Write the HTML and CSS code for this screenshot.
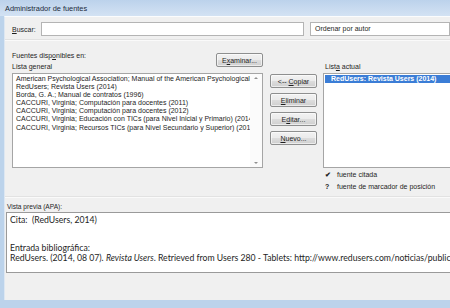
FILE: index.html
```html
<!DOCTYPE html>
<html lang="es">
<head>
    <meta charset="UTF-8">
    <title>Administrador de fuentes</title>
    <link rel="stylesheet" href="styles.css">
</head>
<body>
    <div class="window">
        <div class="titlebar">Administrador de fuentes</div>
        <div class="dialog">
            <div class="search-row">
                <span class="search-label"><u>B</u>uscar:</span>
                <div class="field search-field"></div>
                <div class="field sort-field">Ordenar por autor</div>
            </div>
            <div class="rule"></div>

            <div class="lists">
                <div class="col-master">
                    <div class="master-head">
                        <div class="labels">
                            <div>Fuentes disp<u>o</u>nibles en:</div>
                            <div>Lista general</div>
                        </div>
                        <button class="btn btn-browse">E<u>x</u>aminar...</button>
                    </div>
                    <div class="listbox master-list">
                        <div class="items">
                            <div class="item">American Psychological Association; Manual of the American Psychological Association</div>
                            <div class="item">RedUsers; Revista Users (2014)</div>
                            <div class="item">Borda, G. A.; Manual de contratos (1996)</div>
                            <div class="item">CACCURI, Virginia; Computación para docentes (2011)</div>
                            <div class="item">CACCURI, Virginia; Computación para docentes (2012)</div>
                            <div class="item">CACCURI, Virginia; Educación con TICs (para Nivel Inicial y Primario) (2014)</div>
                            <div class="item">CACCURI, Virginia; Recursos TICs (para Nivel Secundario y Superior) (2014)</div>
                        </div>
                        <div class="scrollbar">
                            <span class="arrow up"></span>
                            <span class="arrow down"></span>
                        </div>
                    </div>
                </div>

                <div class="col-buttons">
                    <button class="btn">&lt;-- <u>C</u>opiar</button>
                    <button class="btn"><u>E</u>liminar</button>
                    <button class="btn">E<u>d</u>itar...</button>
                    <button class="btn"><u>N</u>uevo...</button>
                </div>

                <div class="col-current">
                    <div class="current-label">List<u>a</u> actual</div>
                    <div class="listbox current-list">
                        <div class="item selected">RedUsers: Revista Users (2014)</div>
                    </div>
                    <div class="legend">
                        <div class="legend-row"><span class="mark">&#10004;</span>fuente citada</div>
                        <div class="legend-row"><span class="mark">?</span>fuente de marcador de posición</div>
                    </div>
                </div>
            </div>

            <div class="rule"></div>
            <div class="preview-label">Vista previa (APA):</div>
            <div class="preview">
                <p>Cita:&nbsp; (RedUsers, 2014)</p>
                <p class="entry-head">Entrada bibliográfica:</p>
                <p>RedUsers. (2014, 08 07). <i>Revista Users</i>. Retrieved from Users 280 - Tablets: http://www.redusers.com/noticias/publicaciones/</p>
            </div>
        </div>
    </div>
</body>
</html>
```

FILE: styles.css
```css
body {
    margin: 0;
    background: #bcd3eb;
    font-family: "Liberation Sans", Arial, sans-serif;
    font-size: 7px;
    color: #1e1e1e;
}

.window {
    width: 450px;
    height: 308px;
    overflow: hidden;
    display: flex;
    flex-direction: column;
}

.titlebar {
    height: 16px;
    flex: none;
    box-sizing: border-box;
    padding: 4px 0 0 5px;
    font-size: 7.4px;
    color: #1b2a3a;
    background: linear-gradient(#bcd2eb, #d3e2f3);
}

.dialog {
    height: 284px;
    flex: none;
    margin-left: 4px;
    background: #f0f0f0;
    border-top: 1px solid #fbfcfd;
    border-left: 1px solid #dde7f2;
    box-sizing: border-box;
    overflow: hidden;
}

.search-row {
    display: flex;
    align-items: center;
    margin: 5px 0 0 7px;
    height: 14px;
}

.search-label {
    width: 30px;
}

.field {
    height: 14px;
    box-sizing: border-box;
    background: #fff;
    border: 1px solid #b4b4b4;
    padding: 2px 0 0 4px;
}

.search-field {
    width: 276px;
}

.sort-field {
    margin-left: 6px;
    width: 140px;
    flex: none;
}

.rule {
    height: 1px;
    background: #e2e2e2;
    border-bottom: 1px solid #fafafa;
    margin-top: 3px;
}

.lists {
    display: flex;
    margin: 6px 0 0 7px;
}

.col-master {
    width: 251px;
    flex: none;
}

.master-head {
    display: flex;
    justify-content: space-between;
    align-items: flex-end;
    height: 25px;
}

.labels div {
    line-height: 11px;
}

.btn {
    font-family: inherit;
    font-size: 7px;
    color: #1e1e1e;
    height: 14px;
    width: 47px;
    padding: 0;
    border: 1px solid #8e8f8f;
    border-radius: 2px;
    background: linear-gradient(#f2f2f2 0%, #ebebeb 50%, #dddddd 51%, #cfcfcf 100%);
    box-shadow: inset 0 0 0 1px rgba(255, 255, 255, 0.6);
}

.btn-browse {
    margin-bottom: 5px;
}

.listbox {
    background: #fff;
    border: 1px solid #a5a5a5;
    box-sizing: border-box;
    height: 95px;
    margin-top: 1px;
}

.master-list {
    display: flex;
}

.items {
    flex: 1;
    overflow: hidden;
    padding: 1px 0 0 3px;
}

.item {
    white-space: nowrap;
    line-height: 8.1px;
}

.scrollbar {
    width: 12px;
    flex: none;
    display: flex;
    flex-direction: column;
    justify-content: space-between;
    align-items: center;
    padding: 3px 0;
    box-sizing: border-box;
    background: #fbfbfb;
}

.arrow {
    width: 0;
    height: 0;
    border-left: 2px solid transparent;
    border-right: 2px solid transparent;
}

.arrow.up {
    border-bottom: 2px solid #909090;
}

.arrow.down {
    border-top: 2px solid #909090;
}

.col-buttons {
    display: flex;
    flex-direction: column;
    gap: 5px;
    margin: 27px 0 0 7px;
}

.col-current {
    margin-left: 6px;
    width: 140px;
    flex: none;
}

.current-label {
    margin-top: 14px;
    line-height: 11px;
    padding-left: 2px;
}

.current-list {
    padding: 1px 0 0 1px;
}

.item.selected {
    background: #3b7dd6;
    color: #fff;
    font-weight: bold;
    padding-left: 6px;
    line-height: 8px;
}

.legend {
    margin-top: 1px;
    padding-left: 2px;
}

.legend-row {
    line-height: 12px;
}

.mark {
    display: inline-block;
    width: 12px;
    font-weight: bold;
}

.preview-label {
    margin: 4px 0 0 2px;
    line-height: 10px;
    font-size: 6.6px;
}

.preview {
    margin-left: 1px;
    height: 61px;
    width: 460px;
    box-sizing: border-box;
    background: #fff;
    border: 1px solid #9a9a9a;
    padding: 2px 0 0 3px;
    font-family: Lato, "Liberation Sans", sans-serif;
    font-size: 8.7px;
    white-space: nowrap;
}

.preview p {
    margin: 0;
    line-height: 10px;
}

.entry-head {
    padding-top: 18px;
}
```
